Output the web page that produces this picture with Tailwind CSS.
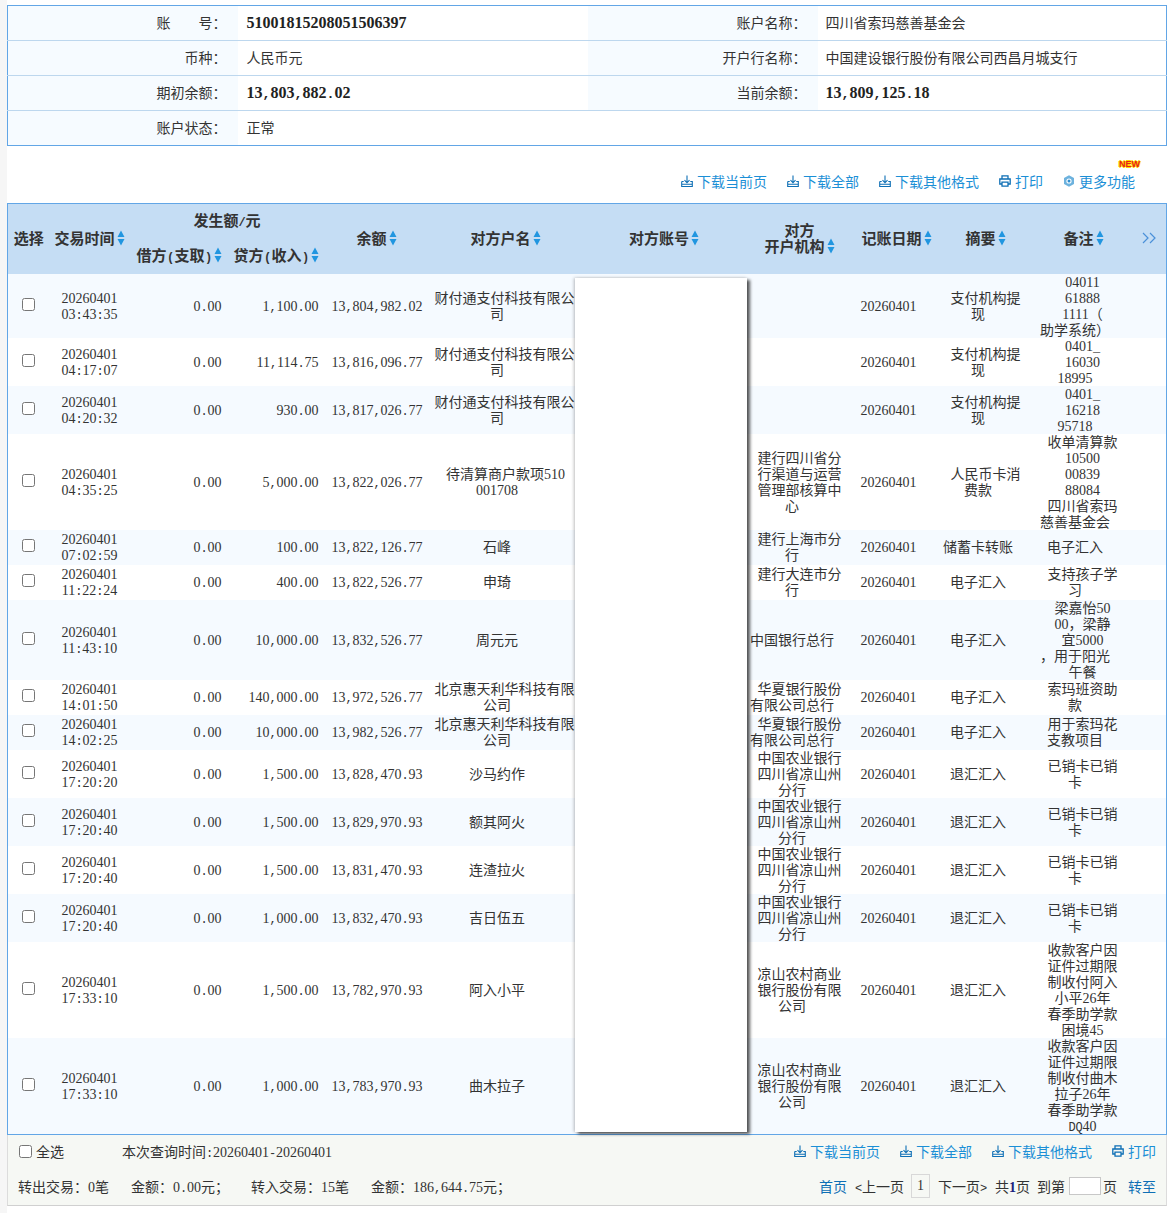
<!DOCTYPE html>
<html lang="zh-CN">
<head>
    <meta charset="UTF-8">
    <title>账户明细</title>
    <script src="https://cdn.jsdelivr.net/npm/@tailwindcss/browser@4"></script>
</head>
<body class="bg-[#f6f6f6] font-['Noto_Sans_CJK_SC',sans-serif] text-[14px] leading-4 text-[#333]">
<svg class="hidden">
    <symbol id="dl" viewBox="0 0 12 12"><path d="M6 .5v7M3.5 5.2 6 7.8l2.5-2.6M.7 6.5v5h10.6v-5h-2M.7 6.5h2M.7 9.3h10.6" fill="none" stroke="#0e6fb5" stroke-width="1.1"/></symbol>
    <symbol id="pr" viewBox="0 0 12 12"><path d="M3 4V.8h6V4M3 9H.8V4h10.4v5H9M3 7.2h6v4H3z" fill="none" stroke="#0e6fb5" stroke-width="1.3"/></symbol>
    <symbol id="gear" viewBox="0 0 12 12"><path d="M6 .3 11 3v6l-5 2.7L1 9V3z" fill="#6db2de"/><circle cx="6" cy="6" r="2.6" fill="#fff"/><circle cx="6" cy="6" r="1.5" fill="#2f8fd0"/></symbol>
    <symbol id="sort" viewBox="0 0 8 16"><path d="M4 .5 7.5 7H.5zM4 15.5.5 9h7z" fill="#2196e0"/></symbol>
</svg>

<div class="ml-[7px] min-h-[1213px] bg-white pt-[5px]">
    <!-- account info -->
    <table class="w-[1160px] table-fixed border-collapse border border-[#62a6e6] [&_td]:pb-[2px]">
        <colgroup><col class="w-[230px]"><col class="w-[350px]"><col class="w-[230px]"><col></colgroup>
        <tbody>
            <tr class="h-[35px] border-b border-[#bdd7ee]">
                <td class="bg-[#f6fbff] pr-[11px] text-right"><span class="mr-[28px]">账</span>号：</td>
                <td class="pl-[9px]" data-bold>51001815208051506397</td>
                <td class="bg-[#f6fbff] pr-[11px] text-right">账户名称：</td>
                <td class="pl-[8px]">四川省索玛慈善基金会</td>
            </tr>
            <tr class="h-[35px] border-b border-[#bdd7ee]">
                <td class="bg-[#f6fbff] pr-[11px] text-right">币种：</td>
                <td class="pl-[9px]">人民币元</td>
                <td class="bg-[#f6fbff] pr-[11px] text-right">开户行名称：</td>
                <td class="pl-[8px]">中国建设银行股份有限公司西昌月城支行</td>
            </tr>
            <tr class="h-[35px] border-b border-[#bdd7ee]">
                <td class="bg-[#f6fbff] pr-[11px] text-right">期初余额：</td>
                <td class="pl-[9px]" data-bold>13,803,882.02</td>
                <td class="bg-[#f6fbff] pr-[11px] text-right">当前余额：</td>
                <td class="pl-[8px]" data-bold>13,809,125.18</td>
            </tr>
            <tr class="h-[35px]">
                <td class="bg-[#f6fbff] pr-[11px] text-right">账户状态：</td>
                <td class="pl-[9px]">正常</td>
                <td></td>
                <td></td>
            </tr>
        </tbody>
    </table>

    <!-- toolbar -->
    <div class="flex h-[57px] items-end justify-end gap-5 pb-[14px] pr-[34px] text-[#1b8fd6]">
        <a class="flex items-center gap-1"><svg class="h-3 w-3"><use href="#dl"/></svg>下载当前页</a>
        <a class="flex items-center gap-1"><svg class="h-3 w-3"><use href="#dl"/></svg>下载全部</a>
        <a class="flex items-center gap-1"><svg class="h-3 w-3"><use href="#dl"/></svg>下载其他格式</a>
        <a class="flex items-center gap-1"><svg class="h-3 w-3"><use href="#pr"/></svg>打印</a>
        <a class="relative flex items-center gap-1">
            <svg class="h-3 w-3"><use href="#gear"/></svg>更多功能
            <span class="absolute right-[-5px] top-[-14px] font-['Liberation_Sans',sans-serif] text-[9px] font-bold leading-[10px] text-[#e8201a] [text-shadow:1px_0_#ffd800,-1px_0_#ffd800,0_1px_#ffd800,0_-1px_#ffd800]">NEW</span>
        </a>
    </div>

    <!-- transactions -->
    <div class="relative w-[1160px]">
        <table class="w-full table-fixed border-collapse border border-[#62a6e6]">
            <colgroup>
                <col class="w-[42px]"><col class="w-[80px]"><col class="w-[98px]"><col class="w-[97px]"><col class="w-[104px]">
                <col class="w-[137px]"><col class="w-[179px]"><col class="w-[95px]"><col class="w-[98px]"><col class="w-[81px]"><col class="w-[113px]"><col>
            </colgroup>
            <thead class="bg-[#c5ddf4] text-[15px] font-bold [&_th]:pb-[2px]">
                <tr class="h-[35px]">
                    <th rowspan="2">选择</th>
                    <th rowspan="2"><div class="flex items-center justify-center gap-[2px]">交易时间<svg class="h-4 w-2"><use href="#sort"/></svg></div></th>
                    <th colspan="2">发生额<span data-n>/</span>元</th>
                    <th rowspan="2"><div class="flex items-center justify-center gap-[2px]">余额<svg class="h-4 w-2"><use href="#sort"/></svg></div></th>
                    <th rowspan="2"><div class="-mr-[17px] flex items-center justify-center gap-[2px]">对方户名<svg class="h-4 w-2"><use href="#sort"/></svg></div></th>
                    <th rowspan="2"><div class="-mr-[18px] flex items-center justify-center gap-[2px]">对方账号<svg class="h-4 w-2"><use href="#sort"/></svg></div></th>
                    <th rowspan="2"><div class="-mr-[15px] text-center">对方<br><span class="inline-flex items-end gap-[2px]">开户机构<svg class="h-4 w-2"><use href="#sort"/></svg></span></div></th>
                    <th rowspan="2"><div class="-mr-[16px] flex items-center justify-center gap-[2px]">记账日期<svg class="h-4 w-2"><use href="#sort"/></svg></div></th>
                    <th rowspan="2"><div class="-mr-[15px] flex items-center justify-center gap-[2px]">摘要<svg class="h-4 w-2"><use href="#sort"/></svg></div></th>
                    <th rowspan="2"><div class="-mr-[17px] flex items-center justify-center gap-[2px]">备注<svg class="h-4 w-2"><use href="#sort"/></svg></div></th>
                    <th rowspan="2"><svg class="ml-[10px] h-3 w-[15px]" viewBox="0 0 15 12" fill="none" stroke="#4a90d9" stroke-width="1.2"><path d="M1 1l5 5-5 5M8 1l5 5-5 5"/></svg></th>
                </tr>
                <tr class="h-[35px]">
                    <th class="pr-[6px]"><div class="flex items-center justify-end gap-px"><span>借方<span class="px-[0.5px]" data-n>(</span>支取<span class="px-[0.5px]" data-n>)</span></span><svg class="h-4 w-2"><use href="#sort"/></svg></div></th>
                    <th class="pr-[6px]"><div class="flex items-center justify-end gap-px"><span>贷方<span class="px-[0.5px]" data-n>(</span>收入<span class="px-[0.5px]" data-n>)</span></span><svg class="h-4 w-2"><use href="#sort"/></svg></div></th>
                </tr>
            </thead>
            <tbody id="rows"></tbody>
        </table>
        <!-- masked account column -->
        <div class="absolute left-[568px] top-[75px] h-[854px] w-[172px] bg-white shadow-[3px_2px_3px_rgba(0,0,0,0.65),-1px_0_3px_rgba(0,0,0,0.25)]"></div>
    </div>

    <!-- footer -->
    <div class="h-[71px] w-[1160px] border-b border-[#d0d0d0] border-x border-x-[#dcdcdc] bg-[#f6f8f4]">
        <div class="flex h-[35px] items-center justify-between pb-[2px] pl-[11px] pr-[10px]">
            <div class="flex items-center">
                <input type="checkbox" class="m-0 h-[13px] w-[13px]">
                <span class="ml-[4px]">全选</span>
                <span class="ml-[58px]">本次查询时间<span data-n>:20260401-20260401</span></span>
            </div>
            <div class="flex gap-5 text-[#1b8fd6]">
                <a class="flex items-center gap-1"><svg class="h-3 w-3"><use href="#dl"/></svg>下载当前页</a>
                <a class="flex items-center gap-1"><svg class="h-3 w-3"><use href="#dl"/></svg>下载全部</a>
                <a class="flex items-center gap-1"><svg class="h-3 w-3"><use href="#dl"/></svg>下载其他格式</a>
                <a class="flex items-center gap-1"><svg class="h-3 w-3"><use href="#pr"/></svg>打印</a>
            </div>
        </div>
        <div class="flex h-[35px] items-center justify-between pb-[2px] pl-[10px] pr-[10px]">
            <div class="flex">
                <span class="w-[113px]">转出交易：<span data-n>0</span>笔</span>
                <span class="w-[120px]">金额：<span data-n>0.00</span>元；</span>
                <span class="w-[120px]">转入交易：<span data-n>15</span>笔</span>
                <span>金额：<span data-n>186,644.75</span>元；</span>
            </div>
            <div class="flex items-center">
                <a class="text-[#0e6fb5]">首页</a>
                <span class="ml-2"><span class="inline-block w-[7px] font-['Liberation_Mono',monospace] text-[12px] leading-[0]">&lt;</span>上一页</span>
                <span class="ml-[7px] flex h-[24px] w-[19px] items-center justify-center border border-[#d8d8d8]" data-n>1</span>
                <span class="ml-2">下一页<span class="inline-block w-[7px] font-['Liberation_Mono',monospace] text-[12px] leading-[0]">&gt;</span></span>
                <span class="ml-2">共<b class="text-[#1a237e]" data-n>1</b>页</span>
                <span class="ml-[7px]">到第</span>
                <input class="ml-1 h-[18px] w-[32px] border border-[#c8c8c8] bg-white">
                <span class="ml-[2px]">页</span>
                <a class="ml-[11px] text-[#0e6fb5]">转至</a>
            </div>
        </div>
    </div>
</div>

<script>
    // half-width text: digits are 7px wide in Liberation Serif, everything else gets a 7px cell
    const num = s => s.replace(/[0-9]+|[A-Za-z,._:\/()\-]/g, m => /[0-9]/.test(m)
        ? `<span class="font-['Liberation_Serif',serif] text-[14px] leading-[0]">${m}</span>`
        : `<span class="inline-block w-[7px] text-center font-['Liberation_Mono',monospace] text-[12px] leading-[0]">${m}</span>`);
    const numBold = s => s.replace(/[0-9]+|[,.]/g, m => /[0-9]/.test(m)
        ? `<span class="font-['Liberation_Serif',serif] text-[16px] font-bold leading-[0] text-[#222]">${m}</span>`
        : `<span class="inline-block w-[8px] text-center font-['Liberation_Mono',monospace] text-[13.33px] font-bold leading-[0] text-[#222]">${m}</span>`);

    // > shifts a line right (overflowing text)
    const lines = arr => arr.map(l => {
        if (l[0] === '>') return `<div class="-mr-[15px] whitespace-nowrap">${num(l.slice(1))}</div>`;
        if (l[0] === '}') return `<div class="-mr-[17px] whitespace-nowrap">${num(l.slice(1))}</div>`;
        return `<div class="whitespace-nowrap">${num(l)}</div>`;
    }).join('');

    document.querySelectorAll('[data-n]').forEach(el => { el.innerHTML = num(el.textContent); });
    document.querySelectorAll('[data-bold]').forEach(el => { el.innerHTML = numBold(el.textContent); });

    const pay = ['>财付通支付科技有限公', '司'];
    const fee = ['>支付机构提', '现'];
    const bj = ['>北京惠天利华科技有限', '公司'];
    const hx = ['>华夏银行股份', '有限公司总行'];
    const abc = ['>中国农业银行', '>四川省凉山州', '分行'];
    const ls = ['>凉山农村商业', '>银行股份有限', '公司'];
    const gone = ['>已销卡已销', '卡'];

    const data = [
        [64, '03:43:35', '1,100.00', '13,804,982.02', pay, [], fee, ['>04011', '>61888', '>1111（', '助学系统）']],
        [48, '04:17:07', '11,114.75', '13,816,096.77', pay, [], fee, ['>0401_', '>16030', '18995']],
        [48, '04:20:32', '930.00', '13,817,026.77', pay, [], fee, ['>0401_', '>16218', '95718']],
        [96, '04:35:25', '5,000.00', '13,822,026.77', ['}待清算商户款项510', '001708'], ['>建行四川省分', '>行渠道与运营', '>管理部核算中', '心'], ['>人民币卡消', '费款'], ['>收单清算款', '>10500', '>00839', '>88084', '>四川省索玛', '慈善基金会']],
        [35, '07:02:59', '100.00', '13,822,126.77', ['石峰'], ['>建行上海市分', '行'], ['储蓄卡转账'], ['电子汇入']],
        [35, '11:22:24', '400.00', '13,822,526.77', ['申琦'], ['>建行大连市分', '行'], ['电子汇入'], ['>支持孩子学', '习']],
        [80, '11:43:10', '10,000.00', '13,832,526.77', ['周元元'], ['中国银行总行'], ['电子汇入'], ['>梁嘉怡50', '>00，梁静', '>宜5000', '，用于阳光', '>午餐']],
        [35, '14:01:50', '140,000.00', '13,972,526.77', bj, hx, ['电子汇入'], ['>索玛班资助', '款']],
        [35, '14:02:25', '10,000.00', '13,982,526.77', bj, hx, ['电子汇入'], ['>用于索玛花', '支教项目']],
        [48, '17:20:20', '1,500.00', '13,828,470.93', ['沙马约作'], abc, ['退汇汇入'], gone],
        [48, '17:20:40', '1,500.00', '13,829,970.93', ['额其阿火'], abc, ['退汇汇入'], gone],
        [48, '17:20:40', '1,500.00', '13,831,470.93', ['连渣拉火'], abc, ['退汇汇入'], gone],
        [48, '17:20:40', '1,000.00', '13,832,470.93', ['吉日伍五'], abc, ['退汇汇入'], gone],
        [96, '17:33:10', '1,500.00', '13,782,970.93', ['阿入小平'], ls, ['退汇汇入'], ['>收款客户因', '>证件过期限', '>制收付阿入', '>小平26年', '>春季助学款', '>困境45']],
        [96, '17:33:10', '1,000.00', '13,783,970.93', ['曲木拉子'], ls, ['退汇汇入'], ['>收款客户因', '>证件过期限', '>制收付曲木', '>拉子26年', '>春季助学款', '>DQ40']]
    ];

    document.getElementById('rows').innerHTML = data.map((r, i) => `
        <tr class="${i % 2 ? 'bg-white' : 'bg-[#f5faff]'}" style="height:${r[0]}px">
            <td class="p-0 text-center"><input type="checkbox" class="m-0 mb-[4px] h-[13px] w-[13px] align-middle"></td>
            <td class="-translate-y-px p-0 text-center">${lines(['20260401', r[1]])}</td>
            <td class="-translate-y-px p-0 pr-[6px] text-right">${num('0.00')}</td>
            <td class="-translate-y-px p-0 pr-[6px] text-right">${num(r[2])}</td>
            <td class="-translate-y-px p-0 pr-[6px] text-right">${num(r[3])}</td>
            <td class="-translate-y-px p-0 text-center">${lines(r[4])}</td>
            <td class="p-0"></td>
            <td class="-translate-y-px p-0 text-center">${lines(r[5])}</td>
            <td class="-translate-y-px p-0 text-center">${num('20260401')}</td>
            <td class="-translate-y-px p-0 text-center">${lines(r[6])}</td>
            <td class="-translate-y-px p-0 text-center">${lines(r[7])}</td>
            <td class="p-0"></td>
        </tr>`).join('');
</script>
</body>
</html>
